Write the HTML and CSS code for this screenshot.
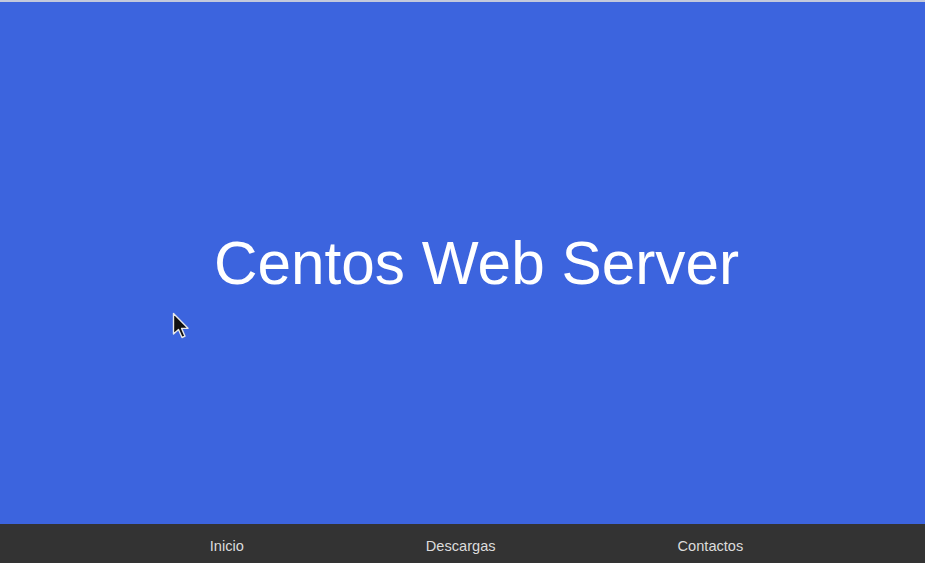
FILE: index.html
```html
<!DOCTYPE html>
<html lang="es">
<head>
<meta charset="utf-8">
<title>Centos Web Server</title>
<link rel="stylesheet" href="styles.css">
</head>
<body>
<div class="page">
  <main class="hero">
    <h1 class="title">Centos Web Server</h1>
  </main>
  <footer class="footer">
    <a class="footer-link" href="#">Inicio</a>
    <a class="footer-link" href="#">Descargas</a>
    <a class="footer-link" href="#">Contactos</a>
  </footer>
</div>
<svg class="cursor" width="20" height="30" viewBox="0 0 20 30" aria-hidden="true">
  <path d="M1.5 1.5 L1.5 22 L6.5 17.5 L10 25.5 L13 24.2 L9.6 16.4 L16 16.2 Z" fill="#111" stroke="#e8e8e8" stroke-width="1.4" stroke-linejoin="round"/>
</svg>
</body>
</html>
```
FILE: styles.css
```css
html, body {
  margin: 0;
  padding: 0;
  height: 100%;
}
body {
  font-family: "Liberation Sans", Arial, sans-serif;
  background: #3c64de;
  overflow: hidden;
}
.page {
  display: flex;
  flex-direction: column;
  height: 100vh;
  border-top: 2px solid #c3c9dc;
  box-sizing: border-box;
}
.hero {
  flex: 1;
  background: #3c64de;
  display: flex;
  justify-content: center;
  padding-left: 28px;
  padding-top: 227px;
  box-sizing: border-box;
}
.title {
  margin: 0;
  font-weight: normal;
  font-size: 60.3px;
  color: #ffffff;
  line-height: 69px;
  height: 69px;
}
.footer {
  height: 39px;
  background: #333333;
  display: flex;
  justify-content: center;
  align-items: center;
  gap: 182px;
  padding-left: 28px;
  padding-top: 4px;
  box-sizing: border-box;
}
.footer-link {
  color: #dcdcdc;
  text-decoration: none;
  font-size: 14.6px;
}
.cursor {
  position: absolute;
  left: 172px;
  top: 312px;
}
```
